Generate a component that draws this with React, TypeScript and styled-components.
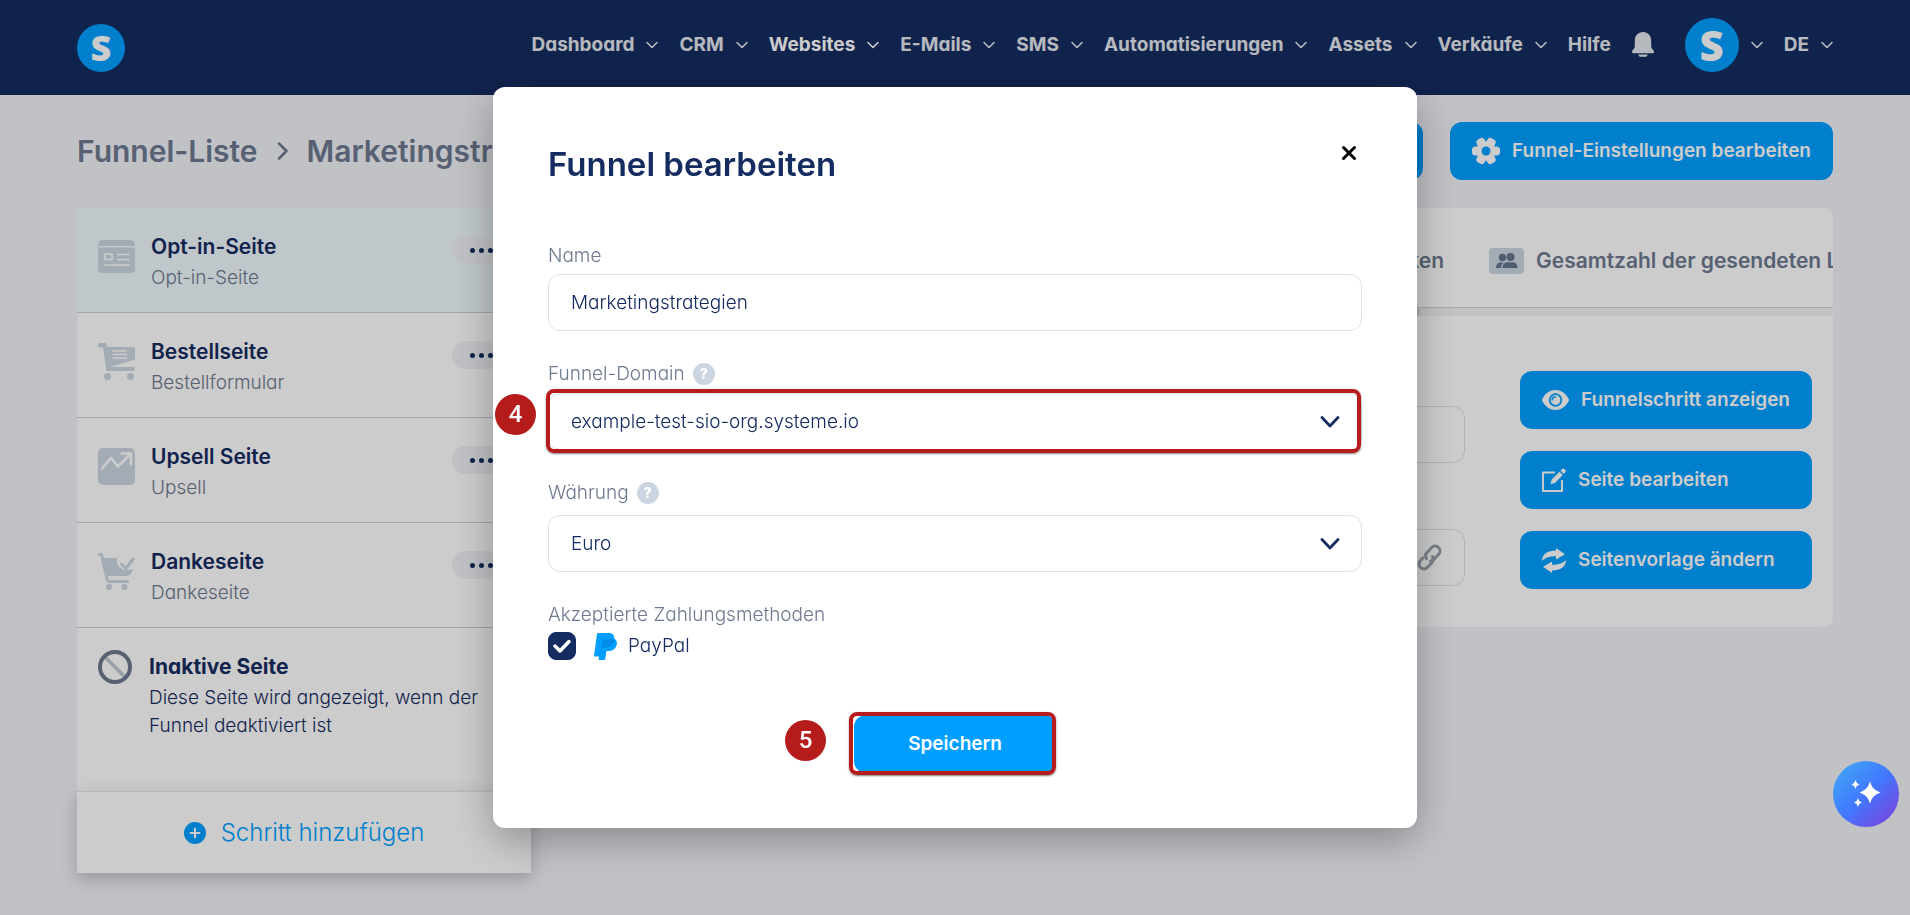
import React from 'react';
import styled, { createGlobalStyle, css } from 'styled-components';

const navy = '#152c60';
const blue = '#009fff';
const slate = '#6d7a90';
const mist = '#ccd6e2';

const GlobalStyle = createGlobalStyle`
  *, *::before, *::after { box-sizing: border-box; }
  body {
    margin: 0;
    background: #f2f3f8;
    color: ${navy};
    font-family: Inter, "Liberation Sans", sans-serif;
    font-size: 19px;
    line-height: 28px;
  }
  button, input, select { font: inherit; color: inherit; }
  h1, h2, h3, p, ul { margin: 0; padding: 0; }
  svg { display: block; flex: none; }
`;

const copyFont = css`
  font-feature-settings: "cv11";
  font-weight: 300;
`;

/* ---------- header ---------- */

const Header = styled.header`
  display: flex;
  align-items: center;
  justify-content: space-between;
  height: 95px;
  padding: 0 77px;
  background: ${navy};
`;

const Disc = styled.span<{ $size: number; $font: number }>`
  display: flex;
  align-items: center;
  justify-content: center;
  width: ${(p) => p.$size}px;
  height: ${(p) => p.$size}px;
  border-radius: 50%;
  background: ${blue};
  color: #fff;
  font: 800 ${(p) => p.$font}px/1 "Open Sans", sans-serif;
`;

const LogoLink = styled.a`
  text-decoration: none;
`;

const Nav = styled.nav`
  display: flex;
  align-items: center;
  gap: 21px;
  padding-bottom: 6px;
`;

const NavButton = styled.button<{ $active?: boolean }>`
  display: flex;
  align-items: center;
  gap: 12px;
  padding: 0;
  border: 0;
  background: none;
  color: ${(p) => (p.$active ? '#fff' : '#e4e8ee')};
  font-feature-settings: "cv11";
  font-weight: 700;
  white-space: nowrap;
`;

const BellButton = styled(NavButton)`
  margin-right: 10px;
`;

/* ---------- page head ---------- */

const Content = styled.main`
  padding: 27px 77px 40px;
`;

const PageHead = styled.div`
  display: flex;
  align-items: center;
  gap: 27px;
  margin-bottom: 28px;
`;

const Crumbs = styled.h1`
  display: flex;
  flex: 1;
  align-items: center;
  gap: 19px;
  min-width: 0;
  overflow: hidden;
  color: ${slate};
  font-size: 30px;
  font-weight: 600;
  line-height: 40px;
  white-space: nowrap;
`;

const CrumbLink = styled.a`
  color: inherit;
  text-decoration: none;
`;

const Action = styled.button`
  display: flex;
  align-items: center;
  gap: 12px;
  height: 58px;
  padding: 0 22px;
  border: 0;
  border-radius: 12px;
  background: ${blue};
  color: #fff;
  font-weight: 600;
  white-space: nowrap;
`;

/* ---------- step list ---------- */

const Columns = styled.div`
  display: flex;
  align-items: flex-start;
  gap: 30px;
`;

const Steps = styled.aside`
  flex: none;
  width: 454px;
  background: #fff;
`;

const StepList = styled.ul`
  list-style: none;
`;

const Step = styled.li<{ $active?: boolean }>`
  display: flex;
  align-items: flex-start;
  height: 105px;
  padding: 24px 20px 0 21px;
  border-bottom: 1px solid #c9d0d7;
  background: ${(p) => (p.$active ? '#f0f9fd' : '#fff')};
`;

const StepIcon = styled.span`
  width: 37px;
  margin: 6px 16px 0 0;
`;

const StepText = styled.div`
  flex: 1;
`;

const StepTitle = styled.h3`
  font-size: 21px;
  font-weight: 600;
  line-height: 30px;
`;

const StepKind = styled.p`
  ${copyFont}
  color: ${slate};
  line-height: 32px;
`;

const MoreButton = styled.button`
  display: flex;
  align-items: center;
  justify-content: center;
  gap: 4px;
  width: 59px;
  height: 28px;
  margin-top: 4px;
  border: 0;
  border-radius: 14px;
  background: #f0f2f6;
`;

const Dot = styled.i`
  width: 5px;
  height: 5px;
  border-radius: 50%;
  background: ${navy};
`;

const Inactive = styled.section`
  ${copyFont}
  display: flex;
  align-items: flex-start;
  gap: 17px;
  height: 163px;
  padding: 22px 20px 0 21px;
`;

const InactiveTitle = styled.h3`
  font-size: 21px;
  font-weight: 700;
  line-height: 34px;
`;

const AddStep = styled.button`
  ${copyFont}
  display: flex;
  align-items: center;
  justify-content: center;
  gap: 15px;
  width: 100%;
  height: 82px;
  padding: 0;
  border: 0;
  border-top: 1px solid #e3e5e8;
  background: #fff;
  box-shadow: 0 6px 16px rgba(30, 35, 50, 0.25);
  color: ${blue};
  font-size: 24px;
`;

/* ---------- step detail ---------- */

const Detail = styled.section`
  flex: 1;
  min-width: 0;
  overflow: hidden;
  border-radius: 10px;
  background: #fff;
`;

const Tabs = styled.div`
  display: flex;
  align-items: center;
  gap: 45px;
  height: 100px;
  padding-top: 6px;
  border-bottom: 1px solid #d3d5d8;
`;

const Tab = styled.button<{ $last?: boolean }>`
  display: flex;
  flex: ${(p) => (p.$last ? '0 0 344px' : '1 1 0')};
  align-items: center;
  justify-content: ${(p) => (p.$last ? 'flex-start' : 'flex-end')};
  gap: 12px;
  min-width: 0;
  padding: 0;
  overflow: hidden;
  border: 0;
  background: none;
  color: ${slate};
  font-size: 21px;
  font-weight: 600;
  white-space: nowrap;
`;

const TabIcon = styled.span`
  display: flex;
  flex: none;
  align-items: center;
  justify-content: center;
  width: 35px;
  height: 26px;
  border-radius: 4px;
  background: ${mist};
  color: #64748b;
`;

const ScrollTrack = styled.div`
  height: 8px;
  border-radius: 4px;
  background: #f3f3f5;
`;

const ScrollThumb = styled.div`
  width: 67.5%;
  height: 8px;
  border-radius: 4px;
  background: #d5d7dc;
`;

const DetailBody = styled.div`
  display: flex;
  gap: 55px;
  padding: 55px 21px 38px 40px;
`;

const DetailFields = styled.div`
  display: flex;
  flex: 1;
  flex-direction: column;
  gap: 66px;
  padding-top: 35px;
`;

const DetailActions = styled.div`
  display: flex;
  flex-direction: column;
  gap: 22px;
`;

const fieldBox = css`
  ${copyFont}
  width: 100%;
  height: 57px;
  padding: 0 22px;
  border: 1px solid #e0e1e4;
  border-radius: 12px;
  outline: 0;
  background: transparent;
`;

const TextInput = styled.input`
  ${fieldBox}
  display: block;
`;

const InputWrap = styled.div`
  position: relative;
`;

const TrailingIcon = styled.span`
  position: absolute;
  top: 0;
  right: 22px;
  display: flex;
  align-items: center;
  height: 57px;
  pointer-events: none;
`;

/* ---------- dialog ---------- */

const Overlay = styled.div`
  position: fixed;
  inset: 0;
  display: flex;
  align-items: flex-start;
  justify-content: center;
  padding: 87px 20px 20px;
  overflow: auto;
  background: rgba(0, 0, 0, 0.2);
`;

const Dialog = styled.form`
  display: flex;
  flex-direction: column;
  width: 100%;
  max-width: 924px;
  padding: 53px 55px 55px;
  border-radius: 12px;
  background: #fff;
  box-shadow: 0 12px 40px rgba(0, 0, 0, 0.3);
`;

const DialogHead = styled.div`
  display: flex;
  align-items: flex-start;
  justify-content: space-between;
  margin-bottom: 54px;
`;

const DialogTitle = styled.h2`
  font-size: 33px;
  font-weight: 600;
  line-height: 48px;
`;

const CloseButton = styled.button`
  display: flex;
  align-items: center;
  justify-content: center;
  width: 26px;
  height: 26px;
  padding: 0;
  border: 0;
  background: none;
  color: #000;
`;

const Field = styled.div<{ $gap: number }>`
  display: flex;
  flex-direction: column;
  gap: ${(p) => p.$gap}px;
  margin-bottom: 29px;
`;

const LabelRow = styled.div`
  ${copyFont}
  display: flex;
  align-items: center;
  gap: 8px;
  color: ${slate};
`;

const Help = styled.button`
  display: flex;
  align-items: center;
  justify-content: center;
  width: 22px;
  height: 22px;
  padding: 0;
  border: 0;
  border-radius: 50%;
  background: #cbd5e1;
  color: #fff;
  font-size: 14px;
  font-weight: 800;
  line-height: 22px;
`;

const Select = styled.select`
  ${fieldBox}
  display: block;
  appearance: none;
`;

const Highlight = styled.span<{ $inset: string }>`
  position: absolute;
  inset: ${(p) => p.$inset};
  border: 4px solid #b71c1c;
  border-radius: 8px;
  box-shadow: 0 1px 2px rgba(0, 0, 0, 0.5);
  pointer-events: none;
`;

const Badge = styled.span<{ $left: number; $top: number }>`
  position: absolute;
  top: ${(p) => p.$top}px;
  left: ${(p) => p.$left}px;
  display: flex;
  align-items: center;
  justify-content: center;
  width: 41px;
  height: 41px;
  border-radius: 50%;
  background: #b71c1c;
  color: #fff;
  font: 500 24px/41px Roboto, sans-serif;
`;

const MethodSet = styled.fieldset`
  ${copyFont}
  min-width: 0;
  margin: 0 0 55px;
  padding: 0;
  border: 0;
`;

const MethodLegend = styled.legend`
  margin-bottom: 3px;
  padding: 0;
  color: ${slate};
`;

const Method = styled.label`
  display: flex;
  align-items: center;
  height: 28px;
`;

const CheckWrap = styled.span`
  position: relative;
  width: 28px;
  height: 28px;
  margin-right: 18px;
`;

const Checkbox = styled.input`
  display: block;
  width: 28px;
  height: 28px;
  margin: 0;
  border: 1px solid ${navy};
  border-radius: 8px;
  appearance: none;

  &:checked { background: ${navy}; }
`;

const CheckMark = styled.svg`
  position: absolute;
  inset: 0;
  pointer-events: none;
`;

const MethodName = styled.span`
  margin-left: 11px;
`;

const SaveWrap = styled.div`
  position: relative;
  align-self: center;
`;

const SaveButton = styled.button`
  display: block;
  width: 202px;
  height: 58px;
  border: 0;
  border-radius: 12px;
  background: ${blue};
  color: #fff;
  font-weight: 600;
`;

const AssistantButton = styled.button`
  position: fixed;
  right: 11px;
  bottom: 88px;
  display: flex;
  align-items: center;
  justify-content: center;
  width: 66px;
  height: 66px;
  padding: 0;
  border: 0;
  border-radius: 50%;
  background: linear-gradient(135deg, #3fa4f6 8%, #4278ff 50%, #7646dc 92%);
`;

/* ---------- drawings ---------- */

const Chevron = () => (
  <svg width="12" height="8" viewBox="0 0 12 8" fill="none" stroke="currentColor" strokeWidth="1.6" strokeLinecap="round" strokeLinejoin="round">
    <path d="M1 1.5 6 6.5l5-5" />
  </svg>
);

const SelectChevron = () => (
  <svg width="20" height="12" viewBox="0 0 20 12" fill="none" stroke={navy} strokeWidth="2.8" strokeLinecap="round" strokeLinejoin="round">
    <path d="M2 1.500l8 8.500 8-8.500" />
  </svg>
);

const Bell = () => (
  <svg width="22" height="25" viewBox="0 0 22 25" fill="currentColor">
    <path d="M11 0C6 0 2.8 3.700 2.800 8.500v5.500c0 1.600-.6 2.500-1.500 3.600C.4 18.700 0 19.300 0 20c0 .8.600 1.200 1.400 1.200h19.200c.8 0 1.400-.4 1.400-1.200 0-.7-.4-1.300-1.300-2.400-.9-1.100-1.500-2-1.500-3.600V8.500C19.200 3.700 16 0 11 0z" />
    <path d="M6.500 22.400h9c0 1.600-1 2.400-2.400 2.400H8.900c-1.400 0-2.400-.8-2.400-2.400z" />
  </svg>
);

const GearIcon = () => (
  <svg width="28" height="28" viewBox="0 0 28 28" fill="#fff">
    <rect x="0" y="9.500" width="28" height="9" rx="3.500" />
    <rect x="0" y="9.500" width="28" height="9" rx="3.500" transform="rotate(60 14 14)" />
    <rect x="0" y="9.500" width="28" height="9" rx="3.500" transform="rotate(120 14 14)" />
    <circle cx="14" cy="14" r="9.500" />
    <circle cx="14" cy="14" r="4.500" fill={blue} />
  </svg>
);

const PageIcon = () => (
  <svg width="37" height="37" viewBox="0 0 37 37">
    <path d="M5 2h27a5 5 0 0 1 5 5v1H0V7a5 5 0 0 1 5-5z" fill={mist} />
    <path d="M0 9.500h37V31a4 4 0 0 1-4 4H4a4 4 0 0 1-4-4z" fill={mist} />
    <path d="M7 16h7v5.500H7zM19 16.500h12.500M19 21.500h12.500M6.500 27h25" fill="none" stroke="#fff" strokeWidth="1.700" />
  </svg>
);

const CartIcon = () => (
  <svg width="37" height="37" viewBox="0 0 37 37" fill={mist}>
    <path d="M0 1.500A1.500 1.500 0 0 1 1.500 0H6.500a2 2 0 0 1 2 1.600L9 4h28v12.500L12 24h24.500v4H8.500L5 4.500H2A2 2 0 0 1 0 2.500z" />
    <circle cx="9.500" cy="33.500" r="3.500" />
    <circle cx="32.500" cy="33.500" r="3.500" />
    <path d="M15 8h13.500M15 11.500h13.500M15 15h13.500" fill="none" stroke="#fff" strokeWidth="1.500" strokeLinecap="round" />
  </svg>
);

const UpsellIcon = () => (
  <svg width="37" height="37" viewBox="0 0 37 37">
    <rect width="37" height="37" rx="5" fill={mist} />
    <path d="M4 20.500 13 10l7 8.500L33 5.500M23.500 5.500H33V16" fill="none" stroke="#fff" strokeWidth="2.600" strokeLinecap="round" strokeLinejoin="round" />
  </svg>
);

const ThanksIcon = () => (
  <svg width="37" height="37" viewBox="0 0 37 37">
    <path d="M1.500 1.500h2L9 26c.5 2 1.500 2.500 3 2.500h17.500" fill="none" stroke={mist} strokeWidth="3" strokeLinecap="round" strokeLinejoin="round" />
    <path d="M4 5h15c-1 9 5 14 16 11-1 4-3 7-7 7H8z" fill={mist} />
    <path d="M23.500 11l4.500 4.500L35 6" fill="none" stroke={mist} strokeWidth="3" strokeLinecap="round" strokeLinejoin="round" />
    <circle cx="11" cy="34" r="3" fill={mist} />
    <circle cx="26.500" cy="34" r="3" fill={mist} />
  </svg>
);

const BlockedIcon = () => (
  <svg width="34" height="34" viewBox="0 0 34 34" fill="none">
    <path d="M7 7l20 20" stroke="#c2c9d3" strokeWidth="3.500" />
    <circle cx="17" cy="17" r="15" stroke={slate} strokeWidth="4" />
  </svg>
);

const PlusDisc = () => (
  <svg width="22" height="22" viewBox="0 0 22 22">
    <circle cx="11" cy="11" r="11" fill={blue} />
    <path d="M11 6.500v9M6.500 11h9" stroke="#fff" strokeWidth="2" strokeLinecap="round" />
  </svg>
);

const PeopleIcon = () => (
  <svg width="22" height="16" viewBox="0 0 22 16" fill="currentColor">
    <circle cx="6.500" cy="4.500" r="3.700" />
    <circle cx="14.500" cy="4" r="4" />
    <path d="M0 15c0-3.600 1.800-5.600 4.800-5.600H8c-2.200 1.200-3 3-3 5.600zM6.500 15c0-3.800 2-5.800 5.500-5.800h4c3.500 0 5.500 2 5.500 5.800z" />
  </svg>
);

const EyeIcon = () => (
  <svg width="27" height="20" viewBox="0 0 27 20">
    <path d="M13.500 0C20 0 24.600 4.500 26.800 9.200c.3.600.3 1 0 1.600C24.600 15.500 20 20 13.500 20S2.400 15.500.2 10.800c-.3-.6-.3-1 0-1.600C2.400 4.500 7 0 13.500 0z" fill="#fff" />
    <circle cx="13.500" cy="10" r="5.800" fill="none" stroke={blue} strokeWidth="1.800" />
    <path d="M10.200 10a3.300 3.300 0 0 1 3.300-3.300" fill="none" stroke={blue} strokeWidth="1.500" strokeLinecap="round" />
  </svg>
);

const EditIcon = () => (
  <svg width="24" height="24" viewBox="0 0 24 24" fill="none">
    <path d="M13 4.500H1v18.500h19V12" stroke="#fff" strokeWidth="1.900" strokeLinejoin="round" />
    <path d="M8.500 16.200l1.200-4.700L17.500 3.700l3.300 3.300-7.800 7.900z" fill="#fff" />
    <path d="M18.500 2.700l1.700-1.800c.7-.7 1.500-.7 2.200 0l1 1c.7.700.7 1.500 0 2.200L21.700 5.900z" fill="#fff" />
  </svg>
);

const SwapIcon = () => (
  <svg width="24" height="25" viewBox="0 0 24 25" fill="#fff">
    <path d="M0 13C0 6.500 5.500 2.500 14 2.500V0L23 6.200l-9 5.300V8.300C8 8.300 3.500 9.500 0 13z" />
    <path d="M24 12c0 6.500-5.500 10.500-14 10.500V25L1 18.800l9-5.300v3.200c6 0 10.500-1.200 14-4.700z" />
  </svg>
);

const LinkIcon = () => (
  <svg width="27" height="27" viewBox="0 0 27 27" fill="none" stroke="#9aa2ae" strokeWidth="3" strokeLinecap="round" strokeLinejoin="round">
    <path d="M10.500 14.500c-1.500-2-1.200-4 .3-5.700l4.700-5.100a4.800 4.800 0 0 1 7.200 6.500l-4.700 5.100c-1 1.100-2.200 1.600-3.500 1.600" />
    <path d="M16.500 12.500c1.500 2 1.200 4-.3 5.700l-4.700 5.100a4.800 4.800 0 0 1-7.200-6.500L7 13.800" />
  </svg>
);

const CloseIcon = () => (
  <svg width="16" height="16" viewBox="0 0 16 16" stroke="currentColor" strokeWidth="3" strokeLinecap="round">
    <path d="M2.500 2.500l11 11M13.500 2.500l-11 11" />
  </svg>
);

const PayPalIcon = () => (
  <svg width="23" height="27" viewBox="0 0 23 27">
    <path d="M4 0h10c4.500 0 6.500 2 6.300 5.500 2 1.300 2.900 3 2.500 5.500-.7 4.800-3.800 7-8.500 7h-1.800l-1.200 7.700c-.1.800-.6 1.300-1.400 1.300H5.600c-.7 0-1-.4-.9-1.100L5 23.500H.8c-.6 0-.9-.4-.8-1L3 .9C3.100.3 3.500 0 4 0z" fill={blue} />
    <path d="M8.700 6.200h9c1 0 1.900.1 2.600.4-.7 5.400-4.200 8.200-9.300 8.200H7.400z" fill="#008be6" />
  </svg>
);

const Sparkles = () => (
  <svg width="30" height="30" viewBox="0 0 30 30" fill="#fff">
    <path d="M19 2.500c2 6 4 8.500 10.500 11-6.500 2.500-8.500 5-10.500 11-2-6-4-8.500-10.500-11C15 11 17 8.500 19 2.500z" />
    <path d="M4.500 1c1 3 1.600 3.600 4.300 4.500-2.700.9-3.300 1.500-4.300 4.500-1-3-1.600-3.600-4.300-4.500C2.900 4.600 3.500 4 4.500 1z" />
    <path d="M7 19c1 3 1.600 3.600 4.300 4.500-2.700.9-3.300 1.500-4.300 4.500-1-3-1.600-3.600-4.300-4.500C5.400 22.600 6 22 7 19z" />
  </svg>
);

/* ---------- data ---------- */

const menus = ['Dashboard', 'CRM', 'Websites', 'E-Mails', 'SMS', 'Automatisierungen', 'Assets', 'Verkäufe'];

const steps = [
  { title: 'Opt-in-Seite', kind: 'Opt-in-Seite', icon: <PageIcon /> },
  { title: 'Bestellseite', kind: 'Bestellformular', icon: <CartIcon /> },
  { title: 'Upsell Seite', kind: 'Upsell', icon: <UpsellIcon /> },
  { title: 'Dankeseite', kind: 'Dankeseite', icon: <ThanksIcon /> },
];

export default function App() {
  return (
    <>
      <GlobalStyle />
      <Header>
        <LogoLink href="#" aria-label="systeme.io">
          <Disc $size={48} $font={36}>S</Disc>
        </LogoLink>
        <Nav>
          {menus.map((name) => (
            <NavButton key={name} type="button" $active={name === 'Websites'}>
              {name}
              <Chevron />
            </NavButton>
          ))}
          <NavButton type="button">Hilfe</NavButton>
          <BellButton type="button" aria-label="Benachrichtigungen">
            <Bell />
          </BellButton>
          <NavButton type="button" aria-label="Profil">
            <Disc $size={54} $font={42}>S</Disc>
            <Chevron />
          </NavButton>
          <NavButton type="button">
            DE
            <Chevron />
          </NavButton>
        </Nav>
      </Header>

      <Content>
        <PageHead>
          <Crumbs>
            <CrumbLink href="#">Funnel-Liste</CrumbLink>
            <svg width="11" height="18" viewBox="0 0 11 18" fill="none" stroke="currentColor" strokeWidth="2.500" strokeLinecap="round" strokeLinejoin="round">
              <path d="M2 1.500 9.500 9 2 16.500" />
            </svg>
            <span>Marketingstrategien</span>
          </Crumbs>
          <Action type="button">Funnel anzeigen</Action>
          <Action type="button">
            <GearIcon />
            Funnel-Einstellungen bearbeiten
          </Action>
        </PageHead>

        <Columns>
          <Steps>
            <StepList>
              {steps.map((step, index) => (
                <Step key={step.title} $active={index === 0}>
                  <StepIcon>{step.icon}</StepIcon>
                  <StepText>
                    <StepTitle>{step.title}</StepTitle>
                    <StepKind>{step.kind}</StepKind>
                  </StepText>
                  <MoreButton type="button" aria-label="Mehr">
                    <Dot />
                    <Dot />
                    <Dot />
                  </MoreButton>
                </Step>
              ))}
            </StepList>
            <Inactive>
              <BlockedIcon />
              <div>
                <InactiveTitle>Inaktive Seite</InactiveTitle>
                <p>Diese Seite wird angezeigt, wenn der Funnel deaktiviert ist</p>
              </div>
            </Inactive>
            <AddStep type="button">
              <PlusDisc />
              Schritt hinzufügen
            </AddStep>
          </Steps>

          <Detail>
            <Tabs>
              <Tab type="button">Statistiken</Tab>
              <Tab type="button" $last>
                <TabIcon>
                  <PeopleIcon />
                </TabIcon>
                Gesamtzahl der gesendeten Leads
              </Tab>
            </Tabs>
            <ScrollTrack>
              <ScrollThumb />
            </ScrollTrack>
            <DetailBody>
              <DetailFields>
                <TextInput aria-label="Name des Schritts" />
                <InputWrap>
                  <TextInput aria-label="URL-Pfad" />
                  <TrailingIcon>
                    <LinkIcon />
                  </TrailingIcon>
                </InputWrap>
              </DetailFields>
              <DetailActions>
                <Action type="button">
                  <EyeIcon />
                  Funnelschritt anzeigen
                </Action>
                <Action type="button">
                  <EditIcon />
                  Seite bearbeiten
                </Action>
                <Action type="button">
                  <SwapIcon />
                  Seitenvorlage ändern
                </Action>
              </DetailActions>
            </DetailBody>
          </Detail>
        </Columns>
      </Content>

      <Overlay>
        <Dialog role="dialog" aria-labelledby="dialog-title" onSubmit={(event) => event.preventDefault()}>
          <DialogHead>
            <DialogTitle id="dialog-title">Funnel bearbeiten</DialogTitle>
            <CloseButton type="button" aria-label="Schließen">
              <CloseIcon />
            </CloseButton>
          </DialogHead>

          <Field $gap={4}>
            <LabelRow>
              <label htmlFor="name">Name</label>
            </LabelRow>
            <TextInput id="name" defaultValue="Marketingstrategien" />
          </Field>

          <Field $gap={5}>
            <LabelRow>
              <label htmlFor="domain">Funnel-Domain</label>
              <Help type="button">?</Help>
            </LabelRow>
            <InputWrap>
              <Select id="domain">
                <option>example-test-sio-org.systeme.io</option>
              </Select>
              <TrailingIcon>
                <SelectChevron />
              </TrailingIcon>
              <Highlight $inset="-4px 1px -3px -2px" />
              <Badge $left={-53} $top={1}>4</Badge>
            </InputWrap>
          </Field>

          <Field $gap={8}>
            <LabelRow>
              <label htmlFor="currency">Währung</label>
              <Help type="button">?</Help>
            </LabelRow>
            <InputWrap>
              <Select id="currency">
                <option>Euro</option>
              </Select>
              <TrailingIcon>
                <SelectChevron />
              </TrailingIcon>
            </InputWrap>
          </Field>

          <MethodSet>
            <MethodLegend>Akzeptierte Zahlungsmethoden</MethodLegend>
            <Method>
              <CheckWrap>
                <Checkbox type="checkbox" defaultChecked />
                <CheckMark width="28" height="28" viewBox="0 0 28 28" fill="none" stroke="#fff" strokeWidth="3.500" strokeLinecap="round" strokeLinejoin="round">
                  <path d="M7 14l5 5 9-9.500" />
                </CheckMark>
              </CheckWrap>
              <PayPalIcon />
              <MethodName>PayPal</MethodName>
            </Method>
          </MethodSet>

          <SaveWrap>
            <SaveButton type="submit">Speichern</SaveButton>
            <Highlight $inset="-3px 0 -2px -5px" />
            <Badge $left={-69} $top={5}>5</Badge>
          </SaveWrap>
        </Dialog>
      </Overlay>

      <AssistantButton type="button" aria-label="Assistent">
        <Sparkles />
      </AssistantButton>
    </>
  );
}
